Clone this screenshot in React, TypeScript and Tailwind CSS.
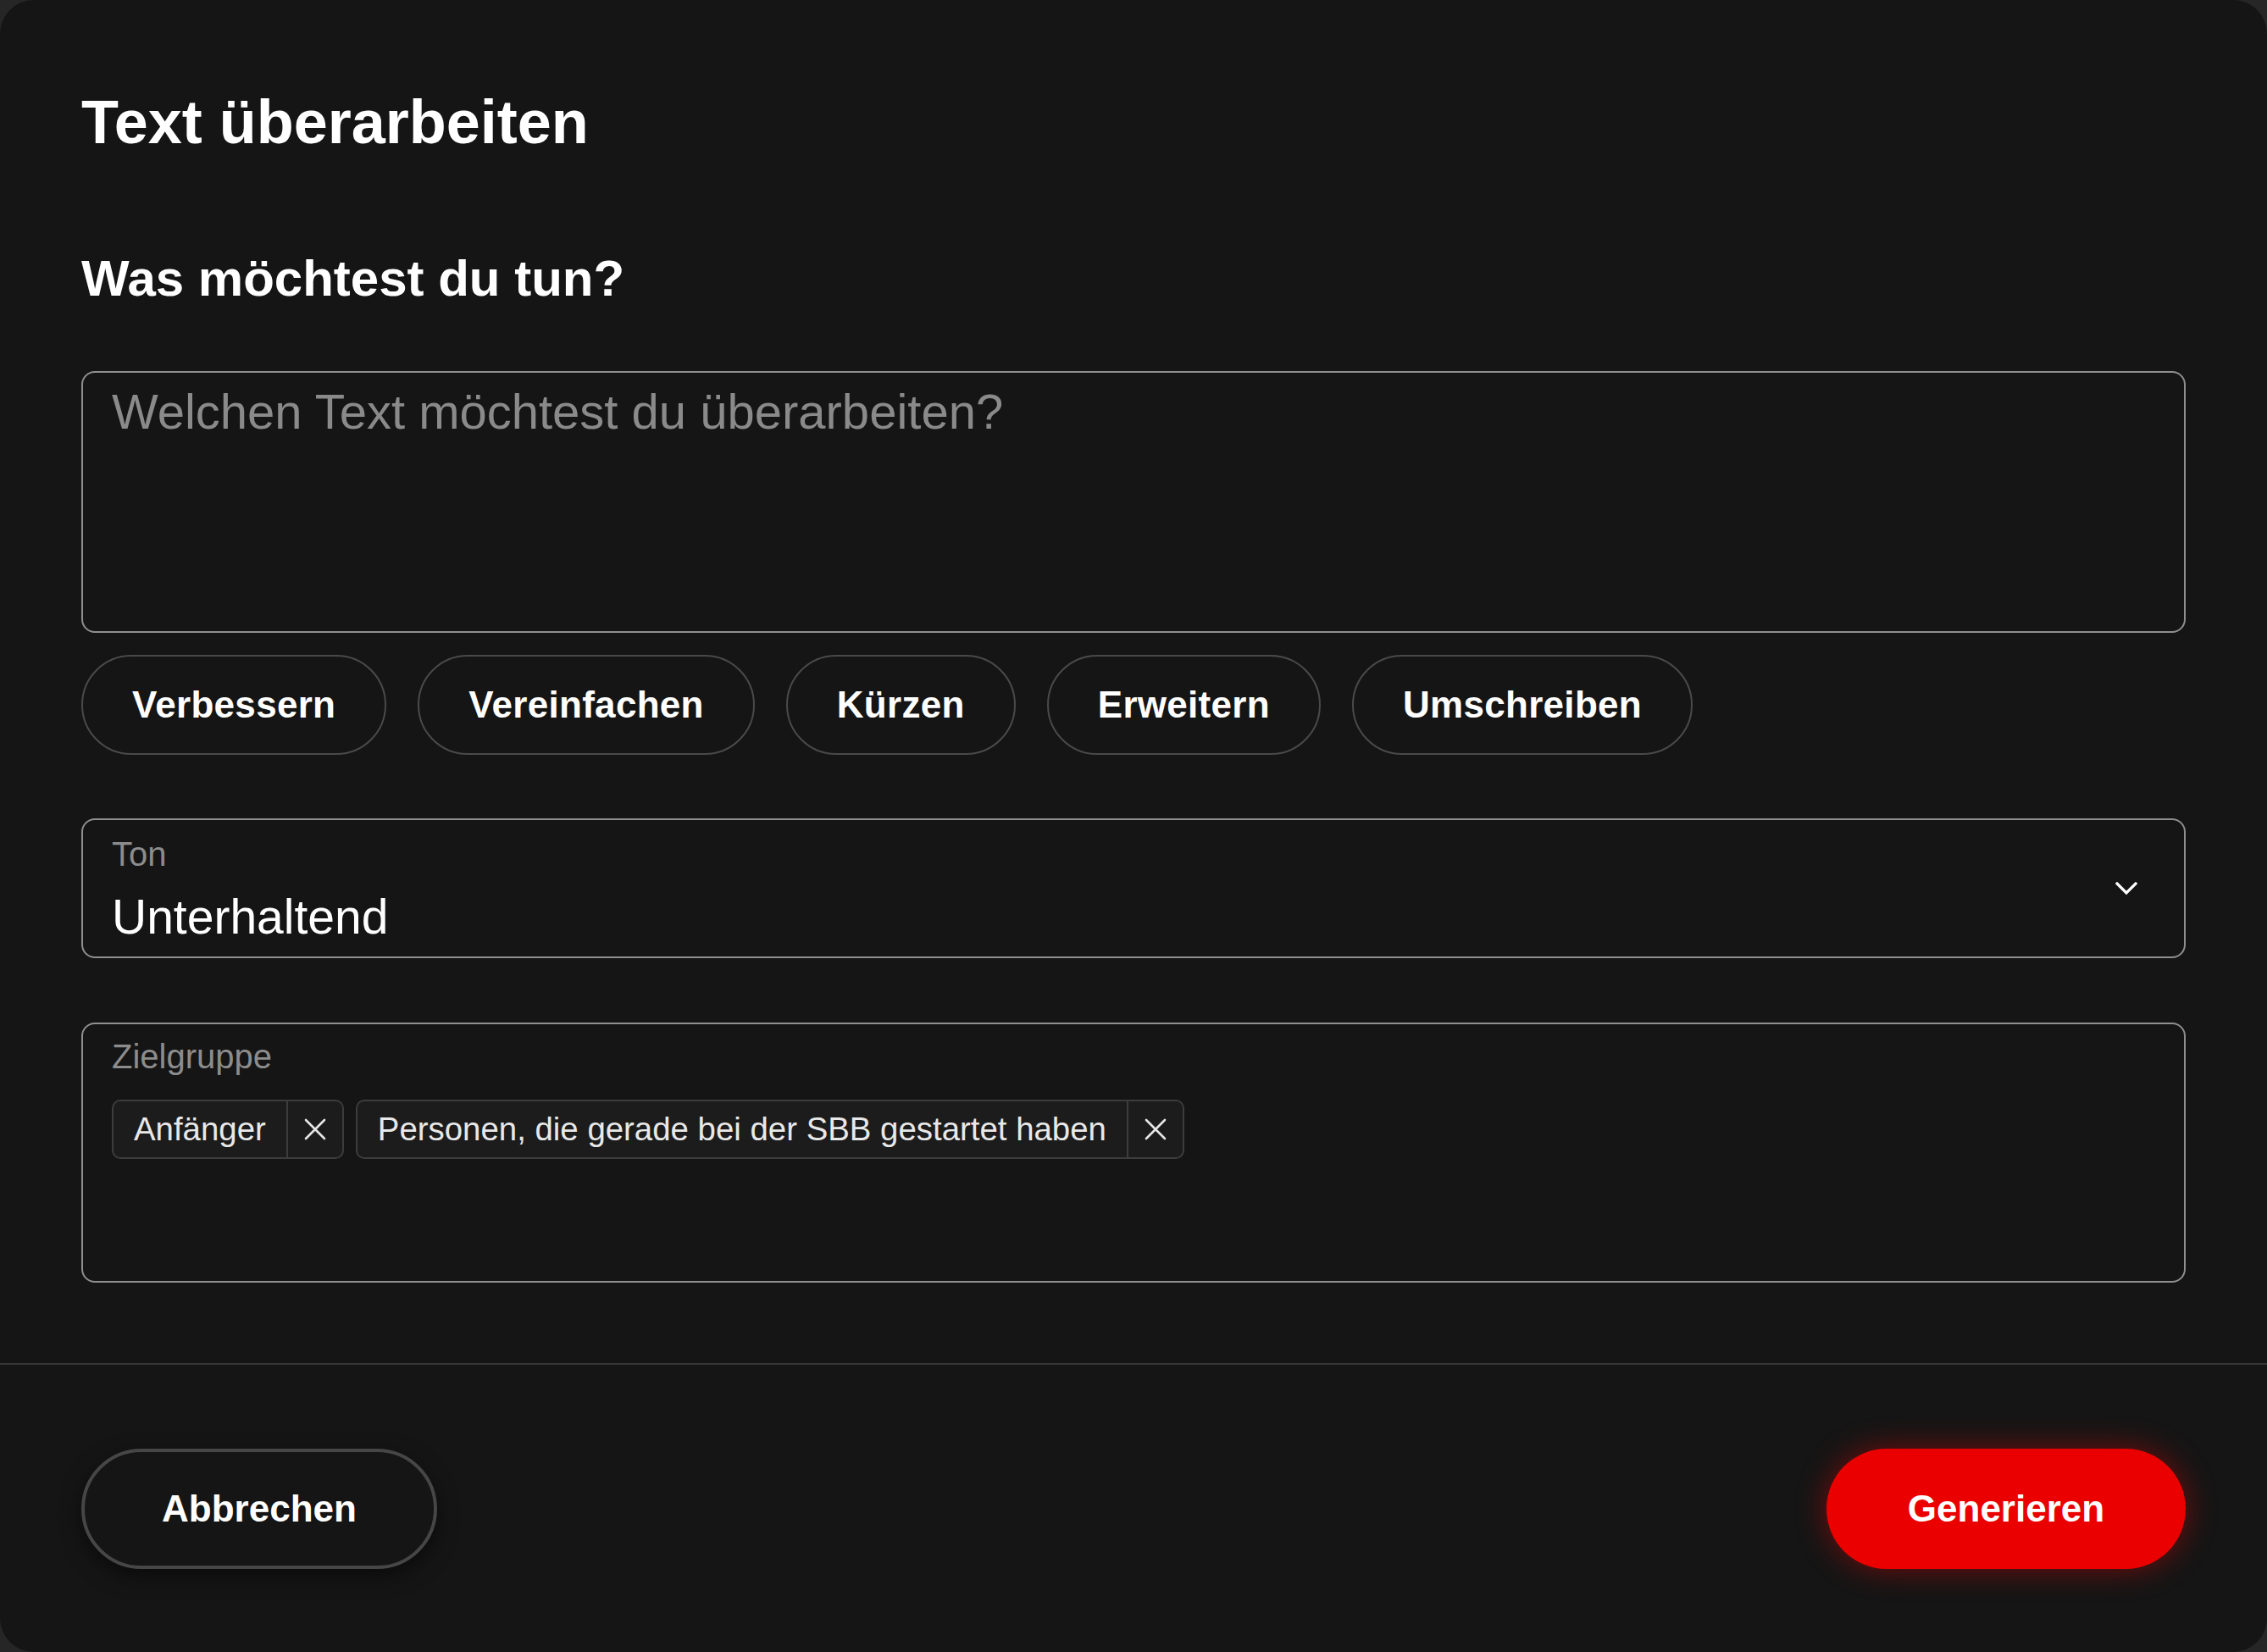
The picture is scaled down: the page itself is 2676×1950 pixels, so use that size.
import React from "react";

function XIcon() {
  return (
    <svg width="28" height="28" viewBox="0 0 28 28" fill="none">
      <path d="M3 3 L25 25 M25 3 L3 25" stroke="#e6e6e6" strokeWidth="2.6" strokeLinecap="round" />
    </svg>
  );
}

function ChevronDown() {
  return (
    <svg width="26" height="16" viewBox="0 0 26 16" fill="none">
      <path d="M2 2 L13 13 L24 2" stroke="#ffffff" strokeWidth="3.2" strokeLinecap="square" strokeLinejoin="miter" />
    </svg>
  );
}

function Tag({ label }: { label: string }) {
  return (
    <div className="flex h-[70px] items-stretch rounded-[10px] border-2 border-[#3c3c3c] bg-[#1c1c1c]">
      <div className="flex items-center px-[24px] text-[38.4px] text-[#e8e8e8]">{label}</div>
      <div className="flex w-[66px] items-center justify-center border-l-2 border-[#3c3c3c]">
        <XIcon />
      </div>
    </div>
  );
}

const chips = ["Verbessern", "Vereinfachen", "Kürzen", "Erweitern", "Umschreiben"];

export default function App() {
  return (
    <div className="h-[1950px] w-[2676px] bg-[#262626] [font-family:'Liberation_Sans',Arial,sans-serif]">
      <div className="flex h-full w-full flex-col overflow-hidden rounded-[40px] bg-[#151515] text-white">
        <div className="flex-1 px-[96px] pt-[100px]">
          <h1 className="text-[72px] font-bold leading-[88px]">Text überarbeiten</h1>
          <h2 className="mt-[105px] text-[60px] font-bold leading-[72px]">Was möchtest du tun?</h2>

          <textarea
            className="mt-[73px] block h-[309px] w-full resize-none rounded-[16px] border-2 border-[#8f8f8f] bg-transparent px-[34px] pt-[10px] text-[58px] leading-[72px] text-white outline-none placeholder:text-[#8a8a8a]"
            placeholder="Welchen Text möchtest du überarbeiten?"
          />

          <div className="mt-[26px] flex gap-[37px]">
            {chips.map((c) => (
              <button
                key={c}
                className="flex h-[118px] items-center rounded-full border-2 border-[#4a4a4a] px-[58px] text-[44px] font-bold tracking-[0.3px] text-white"
              >
                {c}
              </button>
            ))}
          </div>

          <div className="mt-[75px] flex h-[165px] items-center justify-between rounded-[16px] border-2 border-[#8f8f8f] pl-[34px] pr-[55px]">
            <div className="flex flex-col gap-[18px]">
              <span className="text-[40px] leading-[48px] text-[#8c8c8c]">Ton</span>
              <span className="text-[57px] leading-[64px] text-white">Unterhaltend</span>
            </div>
            <ChevronDown />
          </div>

          <div className="mt-[76px] h-[307px] rounded-[16px] border-2 border-[#8f8f8f] px-[34px] pt-[14px]">
            <div className="text-[40px] leading-[48px] text-[#8c8c8c]">Zielgruppe</div>
            <div className="mt-[27px] flex gap-[14px]">
              <Tag label="Anfänger" />
              <Tag label="Personen, die gerade bei der SBB gestartet haben" />
            </div>
          </div>
        </div>

        <div className="flex h-[341px] items-center justify-between border-t-2 border-[#363636] px-[96px]">
          <button className="flex h-[142px] w-[420px] items-center justify-center rounded-full border-4 border-[#464646] text-[44px] font-bold text-white shadow-[0_8px_24px_rgba(0,0,0,0.5)]">
            Abbrechen
          </button>
          <button className="flex h-[142px] w-[424px] items-center justify-center rounded-full bg-[#eb0000] text-[44px] font-bold text-white shadow-[0_0_36px_rgba(235,0,0,0.45)]">
            Generieren
          </button>
        </div>
      </div>
    </div>
  );
}
